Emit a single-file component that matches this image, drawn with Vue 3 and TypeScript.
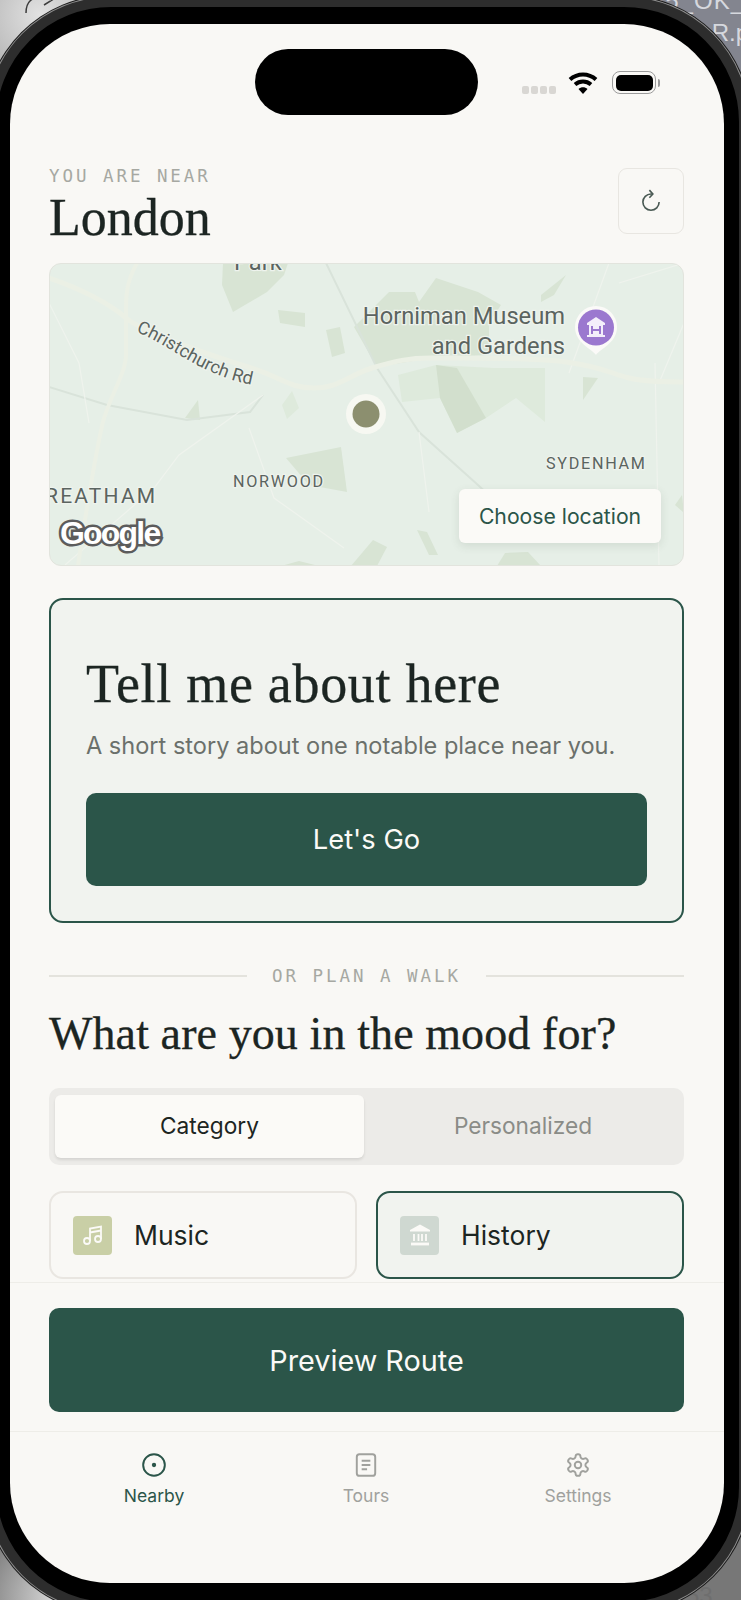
<script setup lang="ts">
interface MoodChip {
  label: string
  icon: 'music' | 'landmark'
  selected: boolean
}

interface NavItem {
  label: string
  icon: 'nearby' | 'tours' | 'settings'
  active: boolean
}

const chips: MoodChip[] = [
  { label: 'Music', icon: 'music', selected: false },
  { label: 'History', icon: 'landmark', selected: true }
]

const navItems: NavItem[] = [
  { label: 'Nearby', icon: 'nearby', active: true },
  { label: 'Tours', icon: 'tours', active: false },
  { label: 'Settings', icon: 'settings', active: false }
]

// map shapes, in the 635x303 space of the map card
const parks: string[] = [
  '174,0 239,0 235,12 218,29 184,49 173,22',
  '229,47 256,50 256,64 231,60',
  '277,67 291,64 296,90 283,94',
  '305,64 340,29 366,29 370,39 387,15 429,29 452,42 440,60 440,92 382,95 328,104',
  '492,32 517,12 505,32 492,39',
  '534,114 549,115 534,137',
  '136,155 149,137 151,157',
  '237,195 292,184 298,229 260,222',
  '368,267 378,269 389,292 380,292',
  '302,303 324,277 338,284 328,303',
  '448,303 456,290 479,289 492,303',
  '626,242 633,232 635,250',
  '232,303 250,298 270,303'
]
const parksFaint: string[] = [
  '349,112 387,102 445,105 496,105 496,159 467,135 437,155 408,170 391,135 353,139',
  '233,142 243,128 250,145 238,156'
]
const parksDark: string[] = ['387,102 408,105 437,155 408,170 391,135']
</script>

<template>
  <div class="stage">
    <svg class="backdrop-arrow" width="34" height="20" viewBox="0 0 34 20">
      <path d="M23 -2c-10-2-17 3-17 15M24 -4l8 4-8 5" />
    </svg>
    <span class="backdrop-text file-top">35_OK_</span>
    <span class="backdrop-text file-ext">R.p</span>
    <span class="backdrop-text file-num">53</span>

    <div class="device">
      <div class="screen">
        <div class="status-bar">
          <div></div>
          <div class="island"></div>
          <div class="status-icons">
            <div class="signal"><i></i><i></i><i></i><i></i></div>
            <svg class="wifi" width="30" height="24" viewBox="0 0 30 24">
              <path d="M2 8.5c7.5-6.7 18.5-6.7 26 0" />
              <path d="M7 13.5c4.7-4 11.3-4 16 0" />
              <path class="wifi-dot" d="M10.5 18c2.6-2.2 6.4-2.2 9 0L15 23z" />
            </svg>
            <div class="battery"><span></span></div>
            <div class="battery-nub"></div>
          </div>
        </div>

        <main class="scroll">
          <header class="header">
            <div>
              <p class="eyebrow">YOU ARE NEAR</p>
              <h1 class="city">London</h1>
            </div>
            <button class="refresh" aria-label="Refresh">
              <svg width="26" height="26" viewBox="0 0 24 24">
                <path d="M19.5 13a7.5 7.5 0 1 1-7.5-7.5h1" />
                <path d="M10.5 2l3.2 3.5-3.2 3.5" />
              </svg>
            </button>
          </header>

          <section class="map">
            <svg class="map-art" width="635" height="303" viewBox="0 0 635 303">
              <polygon v-for="p in parksFaint" :key="p" class="park-faint" :points="p" />
              <polygon v-for="p in parks" :key="p" class="park" :points="p" />
              <polygon v-for="p in parksDark" :key="p" class="park-dark" :points="p" />

              <path class="rail" d="M0 124l58 18 80 15 63-8 13-17M277 0l51 105 42 64 59 53 45 42" />
              <path class="lane" d="M214 132l-84 60-25 33-89 77M200 165l25 70 70 50M0 40l30 60 10 60M560 0l-40 110M606 100l4 203M635 60l-25 60M370 169l10 80M570 20l65-20" />
              <path class="road" d="M0 15C30 25 60 40 77 55S170 95 202 105 240 125 265 125 300 112 323 105 360 95 382 95 480 94 517 99 560 110 580 115 620 118 635 119" />
              <path class="road road-thin" d="M88 0C80 15 77 25 77 45V92C77 110 60 135 54 159S35 260 29 303" />

              <text class="label label-lg" x="185" y="7">Park</text>
              <text class="label label-lg" x="516" y="61" text-anchor="end">Horniman Museum</text>
              <text class="label label-lg" x="516" y="91" text-anchor="end">and Gardens</text>
              <path id="christchurch" fill="none" d="M87 69C120 81 148 110 199 121" />
              <text class="label label-road"><textPath href="#christchurch">Christchurch Rd</textPath></text>
              <text class="label label-area" x="184" y="224">NORWOOD</text>
              <text class="label label-area" x="497" y="206">SYDENHAM</text>
              <text class="label label-big-area" x="-4" y="240">REATHAM</text>
              <text class="google" x="11" y="281">Google</text>

              <path class="pin-base" d="M547 92c-4-6-21-12-21-28a21 21 0 0 1 42 0c0 16-17 22-21 28z" />
              <circle class="pin-fill" cx="547" cy="64.5" r="18" />
              <path class="pin-icon" d="M538 60l9-6 9 6v2h-2v10h2v2h-18v-2h2V62h-2z" />
              <path class="pin-door" d="M542 63h2v3h6v-3h2v8h-2v-3h-6v3h-2z" />

              <circle class="dot-halo" cx="317" cy="151" r="20" />
              <circle class="dot-core" cx="317" cy="151" r="13.5" />
            </svg>
            <button class="choose">Choose location</button>
          </section>

          <section class="story">
            <h2 class="story-title">Tell me about here</h2>
            <p class="story-sub">A short story about one notable place near you.</p>
            <button class="primary story-btn">Let's Go</button>
          </section>

          <div class="divider">
            <span class="divider-line"></span>
            <span class="divider-text">OR PLAN A WALK</span>
            <span class="divider-line"></span>
          </div>

          <h2 class="mood">What are you in the mood for?</h2>

          <div class="segment">
            <div class="segment-item active">Category</div>
            <div class="segment-item">Personalized</div>
          </div>

          <div class="chips">
            <div v-for="chip in chips" :key="chip.label" class="chip" :class="{ selected: chip.selected }">
              <span class="chip-icon" :class="chip.icon">
                <svg v-if="chip.icon === 'music'" width="24" height="24" viewBox="0 0 24 24">
                  <path d="M9 18V5.5l11-2V16M9 9.5l11-2" />
                  <circle cx="6" cy="18" r="3" />
                  <circle cx="17" cy="16" r="3" />
                </svg>
                <svg v-else width="24" height="24" viewBox="0 0 24 24">
                  <path class="solid" d="M12 1.5L22 7v1.5H2V7z" />
                  <path d="M6 11v7M10.5 11v7M14 11v7M18 11v7" />
                  <path class="base" d="M3 21h18" />
                </svg>
              </span>
              <span class="chip-label">{{ chip.label }}</span>
            </div>
          </div>
        </main>

        <div class="action">
          <button class="primary action-btn">Preview Route</button>
        </div>

        <nav class="nav">
          <div v-for="item in navItems" :key="item.label" class="nav-item" :class="{ active: item.active }">
            <svg width="26" height="26" viewBox="0 0 24 24">
              <template v-if="item.icon === 'nearby'">
                <circle cx="12" cy="12" r="10" />
                <circle class="solid" cx="12" cy="12" r="2" />
              </template>
              <template v-else-if="item.icon === 'tours'">
                <rect x="3.5" y="2" width="17" height="20" rx="2.5" />
                <path d="M8 8h8M8 12h8M8 16h5" />
              </template>
              <template v-else>
                <path d="M12.22 2h-.44a2 2 0 0 0-2 2v.18a2 2 0 0 1-1 1.73l-.43.25a2 2 0 0 1-2 0l-.15-.08a2 2 0 0 0-2.73.73l-.22.38a2 2 0 0 0 .73 2.73l.15.1a2 2 0 0 1 1 1.72v.51a2 2 0 0 1-1 1.74l-.15.09a2 2 0 0 0-.73 2.73l.22.38a2 2 0 0 0 2.73.73l.15-.08a2 2 0 0 1 2 0l.43.25a2 2 0 0 1 1 1.73V20a2 2 0 0 0 2 2h.44a2 2 0 0 0 2-2v-.18a2 2 0 0 1 1-1.73l.43-.25a2 2 0 0 1 2 0l.15.08a2 2 0 0 0 2.73-.73l.22-.39a2 2 0 0 0-.73-2.73l-.15-.08a2 2 0 0 1-1-1.74v-.5a2 2 0 0 1 1-1.74l.15-.09a2 2 0 0 0 .73-2.73l-.22-.38a2 2 0 0 0-2.73-.73l-.15.08a2 2 0 0 1-2 0l-.43-.25a2 2 0 0 1-1-1.73V4a2 2 0 0 0-2-2z" />
                <circle cx="12" cy="12" r="3" />
              </template>
            </svg>
            <span class="nav-label">{{ item.label }}</span>
          </div>
        </nav>
      </div>
    </div>
  </div>
</template>

<style>
body {
  background: #999;
}
</style>

<style scoped>
.stage {
  position: relative;
  display: flex;
  align-items: flex-start;
  width: 741px;
  height: 1600px;
  overflow: hidden;
  font-family: Inter, "Liberation Sans", sans-serif;
  color: #1c2522;
  background:
    radial-gradient(circle at 40px 15px, #e2e2e2 0, #b9b9b9 60px, transparent 90px),
    linear-gradient(180deg, #83858f 0, #83858f 130px, transparent 130px),
    radial-gradient(circle at 60px 1600px, #dcdcdc 0, #8b8b8b 70px, #777 90px),
    #d8d8d8;
}

.backdrop-arrow {
  position: absolute;
  left: 20px;
  top: 0;
}

.backdrop-arrow path {
  fill: none;
  stroke: #3c3c3c;
  stroke-width: 1.5;
}

.backdrop-text {
  position: absolute;
  font-family: "Liberation Sans", sans-serif;
  font-size: 24px;
  line-height: 24px;
  color: #d6d8de;
}

.file-top {
  right: -4px;
  top: -11px;
  letter-spacing: 1px;
}

.file-ext {
  right: -8px;
  top: 21px;
}

.file-num {
  left: 686px;
  bottom: -8px;
  color: #6e6e6e;
}

.device {
  position: relative;
  flex: none;
  box-sizing: border-box;
  width: 763px;
  height: 1615px;
  margin: -3px 0 0 -14px;
  padding: 17px 15px 19px 14px;
  background: #000;
  border: 10px solid #2d2d2d;
  border-radius: 125px;
  box-shadow: 0 0 0 1px #8f8f8f, 0 0 0 2px #1a1a1a;
}

.screen {
  display: flex;
  flex-direction: column;
  height: 100%;
  overflow: hidden;
  background: #f9f8f5;
  border-radius: 100px;
}

.status-bar {
  flex: none;
  display: grid;
  grid-template-columns: 245px 223px 1fr;
  box-sizing: border-box;
  height: 91px;
  padding-top: 25px;
}

.island {
  height: 66px;
  background: #000;
  border-radius: 33px;
}

.status-icons {
  display: flex;
  align-items: flex-start;
  padding: 22px 0 0 44px;
}

.signal {
  display: flex;
  gap: 2px;
  margin-top: 15px;
}

.signal i {
  width: 7px;
  height: 8px;
  background: #d9d7d3;
  border-radius: 2px;
}

.wifi {
  margin-left: 12px;
}

.wifi path {
  fill: none;
  stroke: #000;
  stroke-width: 4;
}

.wifi .wifi-dot {
  fill: #000;
  stroke: none;
}

.battery {
  box-sizing: border-box;
  width: 44px;
  height: 23px;
  margin-left: 14px;
  padding: 2.5px;
  border: 1.5px solid #9b9b9b;
  border-radius: 8px;
}

.battery span {
  display: block;
  height: 100%;
  background: #000;
  border-radius: 5px;
}

.battery-nub {
  width: 2px;
  height: 8px;
  margin: 8px 0 0 2px;
  background: #9b9b9b;
  border-radius: 0 2px 2px 0;
}

.scroll {
  flex: 1;
  min-height: 0;
  overflow: hidden;
  padding: 52px 40px 0 39px;
}

.header {
  display: flex;
  justify-content: space-between;
  align-items: flex-start;
}

.eyebrow {
  margin: -1px 0 0;
  font-family: "DejaVu Sans Mono", monospace;
  font-size: 17.5px;
  line-height: 20px;
  letter-spacing: 2.95px;
  color: #a6a8a2;
}

.city {
  margin: 4px 0 0;
  font-family: "Liberation Serif", serif;
  font-size: 52px;
  line-height: 56px;
  font-weight: 400;
  -webkit-text-stroke: 0.3px currentColor;
}

.refresh {
  display: flex;
  align-items: center;
  justify-content: center;
  width: 66px;
  height: 66px;
  padding: 0;
  margin-top: 1px;
  background: transparent;
  border: 1.5px solid #e8e6e1;
  border-radius: 9px;
}

.refresh path {
  fill: none;
  stroke: #4a5a54;
  stroke-width: 1.5;
}

.map {
  position: relative;
  box-sizing: border-box;
  height: 303px;
  margin-top: 17px;
  overflow: hidden;
  background: #e6efe7;
  border: 1px solid #e2e4dd;
  border-radius: 12px;
}

.map-art {
  display: block;
  margin: -1px;
}

.park {
  fill: #d8e4d4;
}

.park-faint {
  fill: #deeadc;
}

.park-dark {
  fill: #d2dfcd;
}

.rail {
  fill: none;
  stroke: #d9e3da;
  stroke-width: 2;
}

.lane {
  fill: none;
  stroke: #eff3ed;
  stroke-width: 1.2;
}

.road {
  fill: none;
  stroke: #ebf0e5;
  stroke-width: 5;
  stroke-linejoin: round;
}

.road-thin {
  stroke-width: 4;
}

.label {
  font-family: Roboto, "Liberation Sans", sans-serif;
  fill: #5b6460;
  stroke: #eef3ed;
  stroke-width: 2.5px;
  paint-order: stroke;
}

.label-lg {
  font-size: 23.7px;
}

.label-road {
  font-size: 18px;
}

.label-area {
  font-size: 16.2px;
  letter-spacing: 1.7px;
}

.label-big-area {
  font-size: 21px;
  letter-spacing: 2.2px;
}

.google {
  font-family: "Liberation Sans", sans-serif;
  font-size: 32px;
  font-weight: 700;
  letter-spacing: -1.8px;
  fill: #fff;
  stroke: #5c5c5c;
  stroke-width: 5px;
  paint-order: stroke;
}

.pin-base {
  fill: #fbfaf8;
}

.pin-fill {
  fill: #9b78cf;
}

.pin-icon {
  fill: #f3eefa;
}

.pin-door {
  fill: #9b78cf;
}

.dot-halo {
  fill: #f7f8f2;
}

.dot-core {
  fill: #8c8f6f;
}

.choose {
  position: absolute;
  right: 22px;
  bottom: 22px;
  width: 202px;
  height: 54px;
  padding: 0;
  font-family: inherit;
  font-size: 21.2px;
  color: #2b5549;
  background: #fbfaf7;
  border: none;
  border-radius: 6px;
  box-shadow: 0 3px 10px rgba(60, 70, 60, 0.12);
}

.story {
  box-sizing: border-box;
  height: 325px;
  margin-top: 32px;
  padding: 54px 35px 0;
  background: #f1f3ef;
  border: 2px solid #2b5549;
  border-radius: 14px;
}

.story-title {
  margin: 0;
  font-family: "Liberation Serif", serif;
  font-size: 54px;
  line-height: 60px;
  font-weight: 400;
  letter-spacing: 0.7px;
  -webkit-text-stroke: 0.3px currentColor;
}

.story-sub {
  margin: 17px 0 0;
  font-size: 23.55px;
  line-height: 30px;
  color: #6b706b;
  white-space: nowrap;
}

.primary {
  display: block;
  width: 100%;
  padding: 0;
  font-family: inherit;
  color: #fbfaf7;
  background: #2b5549;
  border: none;
  border-radius: 10px;
}

.story-btn {
  height: 93px;
  margin-top: 32px;
  font-size: 27.3px;
}

.divider {
  display: flex;
  align-items: center;
  gap: 25px;
  margin-top: 43px;
}

.divider-line {
  flex: 1;
  height: 1.5px;
  background: #e4e3dd;
}

.divider-text {
  font-family: "DejaVu Sans Mono", monospace;
  font-size: 17.5px;
  line-height: 20px;
  letter-spacing: 2.95px;
  color: #a6a8a2;
}

.mood {
  margin: 21px 0 0;
  font-family: "Liberation Serif", serif;
  font-size: 46px;
  line-height: 54px;
  font-weight: 400;
  letter-spacing: 0.1px;
  white-space: nowrap;
  -webkit-text-stroke: 0.3px currentColor;
}

.segment {
  display: grid;
  grid-template-columns: 309px 1fr;
  height: 77px;
  box-sizing: border-box;
  margin-top: 27px;
  padding: 7px 6px;
  background: #ecebe8;
  border-radius: 10px;
}

.segment-item {
  display: flex;
  align-items: center;
  justify-content: center;
  padding: 0 0 2px 4px;
  font-size: 22.7px;
  color: #8a8c87;
}

.segment-item.active {
  padding-left: 0;
  color: #1c2522;
  background: #fbfaf7;
  border-radius: 6px;
  box-shadow: 0 2px 3px rgba(0, 0, 0, 0.1);
}

.chips {
  display: grid;
  grid-template-columns: 1fr 1fr;
  gap: 19px;
  margin-top: 26px;
}

.chip {
  display: flex;
  align-items: center;
  gap: 22px;
  box-sizing: border-box;
  height: 88px;
  padding-left: 22px;
  border: 2px solid #e9e6e1;
  border-radius: 14px;
}

.chip.selected {
  background: #f1f3ef;
  border-color: #2b5549;
}

.chip-icon {
  display: flex;
  align-items: center;
  justify-content: center;
  width: 39px;
  height: 39px;
  border-radius: 4px;
}

.chip-icon.music {
  background: #c9cfa6;
}

.chip-icon.landmark {
  background: #cfd8d1;
}

.chip-icon svg {
  fill: none;
  stroke: #fbfaf7;
  stroke-width: 1.8;
}

.chip-icon .solid {
  fill: #fbfaf7;
  stroke: none;
}

.chip-icon .base {
  stroke-width: 2.8;
}

.chip-label {
  font-size: 26.5px;
}

.action {
  flex: none;
  box-sizing: border-box;
  height: 149px;
  padding: 25px 40px 0 39px;
  border-top: 1.5px solid #eeede8;
}

.action-btn {
  height: 104px;
  font-size: 28.8px;
}

.nav {
  flex: none;
  display: grid;
  grid-template-columns: repeat(3, 212px);
  box-sizing: border-box;
  height: 152px;
  padding: 20px 0 0 38px;
  border-top: 1.5px solid #eeede8;
}

.nav-item {
  display: flex;
  flex-direction: column;
  align-items: center;
  gap: 7px;
  color: #a0a19d;
}

.nav-item.active {
  color: #2b5549;
}

.nav-item svg {
  fill: none;
  stroke: currentColor;
  stroke-width: 1.8;
}

.nav-item .solid {
  fill: currentColor;
  stroke: none;
}

.nav-label {
  font-size: 17.5px;
  line-height: 22px;
}
</style>
